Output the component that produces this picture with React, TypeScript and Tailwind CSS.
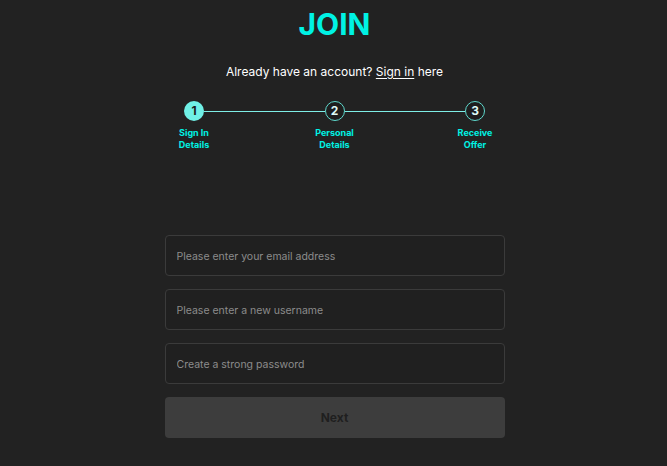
import React from "react";

const steps = [
  { n: 1, label: ["Sign In", "Details"], active: true },
  { n: 2, label: ["Personal", "Details"], active: false },
  { n: 3, label: ["Receive", "Offer"], active: false },
];

const fields = [
  { type: "email", placeholder: "Please enter your email address" },
  { type: "text", placeholder: "Please enter a new username" },
  { type: "password", placeholder: "Create a strong password" },
];

export default function App() {
  return (
    <div
      className="min-h-[466px] w-full bg-[#222222] flex flex-col items-center pl-[2px]"
      style={{ fontFamily: "Inter, 'Noto Sans', sans-serif" }}
    >
      <h1 className="mt-[9px] text-[30px] leading-[30px] font-bold text-[#00f2e4]">
        JOIN
      </h1>

      <p className="mt-[25px] text-[12px] leading-[16px] text-white">
        Already have an account?{" "}
        <a href="#" className="underline underline-offset-2">
          Sign in
        </a>{" "}
        here
      </p>

      {/* Stepper */}
      <div className="mt-[21px] w-[301px] flex items-start">
        {steps.map((s, i) => (
          <React.Fragment key={s.n}>
            <div className="relative flex flex-col items-center w-[20px] shrink-0">
              <div
                className={`w-[20px] h-[20px] rounded-full flex items-center justify-center text-[12px] font-bold leading-none ${
                  s.active
                    ? "bg-[#70f0e6] text-[#1c1c1c]"
                    : "bg-[#1e1e1e] border border-[#5fd8cd] text-[#dffaf7]"
                }`}
              >
                {s.n}
              </div>
              <div className="mt-[6px] text-[9px] leading-[12px] font-bold text-[#00f2e4] text-center whitespace-nowrap">
                {s.label[0]}
                <br />
                {s.label[1]}
              </div>
            </div>
            {i < steps.length - 1 && (
              <div className="flex-1 h-px bg-[#7eeee6] mt-[10px]" />
            )}
          </React.Fragment>
        ))}
      </div>

      {/* Form */}
      <form className="mt-[84px] w-[340px] flex flex-col gap-[13px]">
        {fields.map((f) => (
          <input
            key={f.placeholder}
            type={f.type}
            placeholder={f.placeholder}
            className="h-[41px] w-full rounded-[4px] border border-[#3b3b3b] bg-[#202020] px-[11px] pt-[1px] text-[10.5px] text-white placeholder:text-[#8c8c8c] outline-none"
          />
        ))}
        <button
          type="button"
          className="h-[41px] w-full rounded-[4px] bg-[#3d3d3d] text-[12px] font-bold text-[#1f1f1f]"
        >
          Next
        </button>
      </form>
    </div>
  );
}
